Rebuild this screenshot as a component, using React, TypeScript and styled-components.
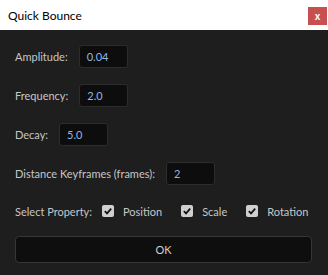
import React from "react";
import styled, { createGlobalStyle } from "styled-components";

const GlobalStyle = createGlobalStyle`
  html, body {
    margin: 0;
    padding: 0;
    background: #1e1e1e;
  }
  body {
    font-family: Lato, "Open Sans", sans-serif;
  }
`;

const Window = styled.div`
  width: 328px;
  height: 275px;
  display: flex;
  flex-direction: column;
  background: #1e1e1e;
`;

const TitleBar = styled.div`
  height: 30px;
  background: #ffffff;
  display: flex;
  align-items: center;
  justify-content: space-between;
  padding-left: 8px;
  box-sizing: border-box;
`;

const Title = styled.span`
  font-family: Lato, "Open Sans", sans-serif;
  font-size: 12px;
  color: #000;
`;

const CloseButton = styled.div`
  width: 19px;
  height: 18px;
  margin-top: 2px;
  margin-right: 1px;
  background: #c84f4f;
  color: #fff;
  font-size: 10px;
  font-weight: 700;
  display: flex;
  align-items: center;
  justify-content: center;
  font-family: "Liberation Sans", sans-serif;
`;

const Body = styled.div`
  flex: 1;
  padding: 15px 16px 0 15px;
  display: flex;
  flex-direction: column;
`;

const Row = styled.div`
  height: 23px;
  display: flex;
  align-items: center;
  gap: 11px;
  margin-bottom: 16px;
`;

const Label = styled.span`
  font-size: 11px;
  color: #c6c6c6;
  white-space: nowrap;
`;

const Field = styled.div`
  width: 49px;
  height: 23px;
  box-sizing: border-box;
  background: #0d0d0d;
  border: 1px solid #2c2c2c;
  border-radius: 3px;
  display: flex;
  align-items: center;
  padding-left: 7px;
  font-size: 11px;
  color: #8fb8e6;
`;

const PropRow = styled.div`
  height: 20px;
  display: flex;
  align-items: center;
`;

const Check = styled.div<{ $first?: boolean }>`
  width: 12px;
  height: 12px;
  border-radius: 2px;
  background: #cfcfcf;
  display: flex;
  align-items: center;
  justify-content: center;
  margin-left: ${(p) => (p.$first ? 10 : 19)}px;
  margin-right: 9px;
`;

const OkButton = styled.div`
  margin-top: 15px;
  height: 27px;
  box-sizing: border-box;
  background: #0e0e0e;
  border: 1px solid #363636;
  border-radius: 4px;
  display: flex;
  align-items: center;
  justify-content: center;
  font-size: 11px;
  color: #cfcfcf;
`;

const CheckItem: React.FC<{ label: string; first?: boolean }> = ({ label, first }) => (
  <>
    <Check $first={first}>
      <svg width="10" height="10" viewBox="0 0 10 10">
        <path d="M1.8 5.2 L4 7.4 L8.2 2.6" fill="none" stroke="#111" strokeWidth="1.7" />
      </svg>
    </Check>
    <Label>{label}</Label>
  </>
);

const App: React.FC = () => (
  <>
    <GlobalStyle />
    <Window>
      <TitleBar>
        <Title>Quick Bounce</Title>
        <CloseButton>x</CloseButton>
      </TitleBar>
      <Body>
        <Row>
          <Label>Amplitude:</Label>
          <Field>0.04</Field>
        </Row>
        <Row>
          <Label>Frequency:</Label>
          <Field>2.0</Field>
        </Row>
        <Row>
          <Label>Decay:</Label>
          <Field>5.0</Field>
        </Row>
        <Row>
          <Label>Distance Keyframes (frames):</Label>
          <Field>2</Field>
        </Row>
        <PropRow>
          <Label>Select Property:</Label>
          <CheckItem label="Position" first />
          <CheckItem label="Scale" />
          <CheckItem label="Rotation" />
        </PropRow>
        <OkButton>OK</OkButton>
      </Body>
    </Window>
  </>
);

export default App;
